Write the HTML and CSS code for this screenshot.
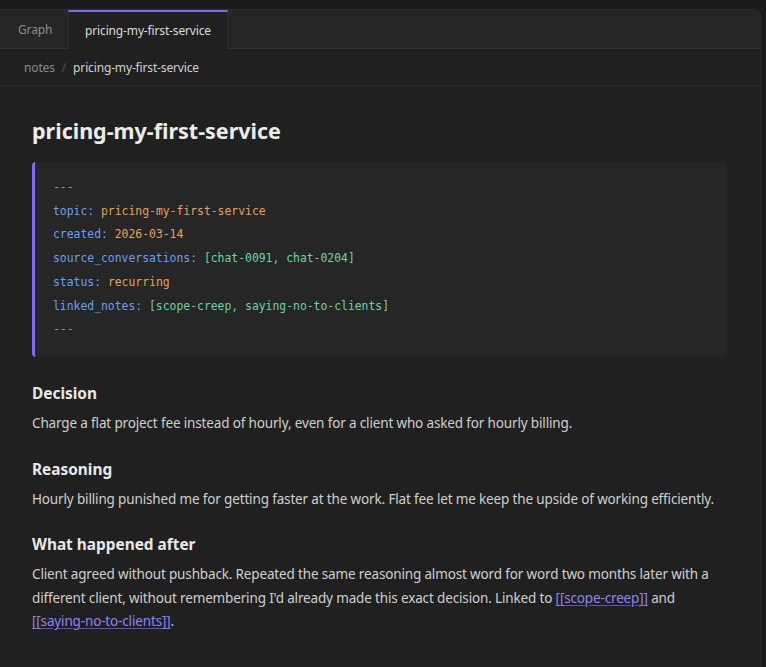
FILE: index.html
```html
<!DOCTYPE html>
<html lang="en">
<head>
    <meta charset="UTF-8">
    <meta name="viewport" content="width=device-width, initial-scale=1.0">
    <title>pricing-my-first-service</title>
    <link rel="stylesheet" href="styles.css">
</head>
<body>

    <div class="pane">
        <!-- tabs -->
        <div class="tabs">
            <div class="tab">Graph</div>
            <div class="tab active">pricing-my-first-service</div>
        </div>

        <!-- breadcrumb -->
        <div class="crumbs">
            <span class="crumb">notes</span>
            <span class="sep">/</span>
            <span class="crumb current">pricing-my-first-service</span>
        </div>

        <div class="note">
            <h1>pricing-my-first-service</h1>

            <pre class="front"><span class="dash">---</span>
<span class="key">topic:</span> <span class="str">pricing-my-first-service</span>
<span class="key">created:</span> <span class="str">2026-03-14</span>
<span class="key">source_conversations:</span> <span class="list">[chat-0091, chat-0204]</span>
<span class="key">status:</span> <span class="str">recurring</span>
<span class="key">linked_notes:</span> <span class="list">[scope-creep, saying-no-to-clients]</span>
<span class="dash">---</span></pre>

            <h3>Decision</h3>
            <p>Charge a flat project fee instead of hourly, even for a client who asked for hourly billing.</p>

            <h3>Reasoning</h3>
            <p>Hourly billing punished me for getting faster at the work. Flat fee let me keep the upside of working efficiently.</p>

            <h3>What happened after</h3>
            <p>Client agreed without pushback. Repeated the same reasoning almost word for word two months later with a different client, without remembering I'd already made this exact decision. Linked to <a href="#" class="wikilink">[[scope-creep]]</a> and <a href="#" class="wikilink">[[saying-no-to-clients]]</a>.</p>
        </div>
    </div>

</body>
</html>
```

FILE: styles.css
```css
* {
  margin: 0;
  padding: 0;
  box-sizing: border-box;
}

body {
  background-color: #1b1b1b;
  height: 100vh;
  overflow: hidden;
  font-family: "Noto Sans", sans-serif;
  font-size: 13.5px;
  letter-spacing: -0.15px;
  color: #cfcfcf;
}

.pane {
  margin-top: 9px;
  width: 761px;
  height: 658px;
  background-color: #202020;
  border: 1px solid #2e2e2e;
  border-left: none;
  border-bottom: none;
  border-radius: 0 8px 0 0;
  overflow: hidden;
}

/* tab bar */
.tabs {
  display: flex;
  height: 39px;
  background-color: #262626;
  border-bottom: 1px solid #343434;
}
.tab {
  display: flex;
  align-items: center;
  width: 68px;
  padding-left: 18px;
  white-space: nowrap;
  font-size: 12px;
  color: #8c8c8c;
}
.tab.active {
  width: 160px;
  padding-left: 0;
  justify-content: center;
  background-color: #202020;
  color: #dcdcdc;
  border-top: 2px solid #7b6cf0;
  border-left: 1px solid #313131;
  border-right: 1px solid #313131;
  margin-bottom: -1px;
}

/* breadcrumb */
.crumbs {
  display: flex;
  align-items: center;
  gap: 7px;
  height: 37px;
  padding: 0 24px;
  border-bottom: 1px solid #2d2d2d;
  font-size: 12px;
}
.crumb {
  color: #8a8a8a;
}
.sep {
  color: #555;
}
.crumb.current {
  color: #d0d0d0;
}

/* note body */
.note {
  padding: 30px 33px 0 32px;
}
h1 {
  font-size: 21.5px;
  font-weight: 700;
  letter-spacing: 0;
  color: #ececec;
  line-height: 30px;
  margin-bottom: 16px;
}
.front {
  background-color: #262626;
  border-left: 3px solid #7b6cf0;
  border-radius: 4px;
  padding: 14px 18px 15px 18px;
  font-family: "DejaVu Sans Mono", monospace;
  font-size: 11.4px;
  letter-spacing: 0;
  line-height: 23.7px;
  color: #a8a8a8;
  margin-bottom: 25px;
}
.dash {
  color: #9a9a9a;
}
.key {
  color: #6d9ff0;
}
.str {
  color: #e0a45e;
}
.list {
  color: #6fd3a0;
}

h3 {
  font-size: 15.4px;
  font-weight: 700;
  letter-spacing: 0;
  color: #e8e8e8;
  line-height: 24px;
  margin-bottom: 6px;
}
p {
  line-height: 23.6px;
  margin-bottom: 22px;
}
.wikilink {
  color: #8f83f5;
  text-decoration: underline;
  text-decoration-color: #5d52b8;
  text-underline-offset: 2px;
}
```
